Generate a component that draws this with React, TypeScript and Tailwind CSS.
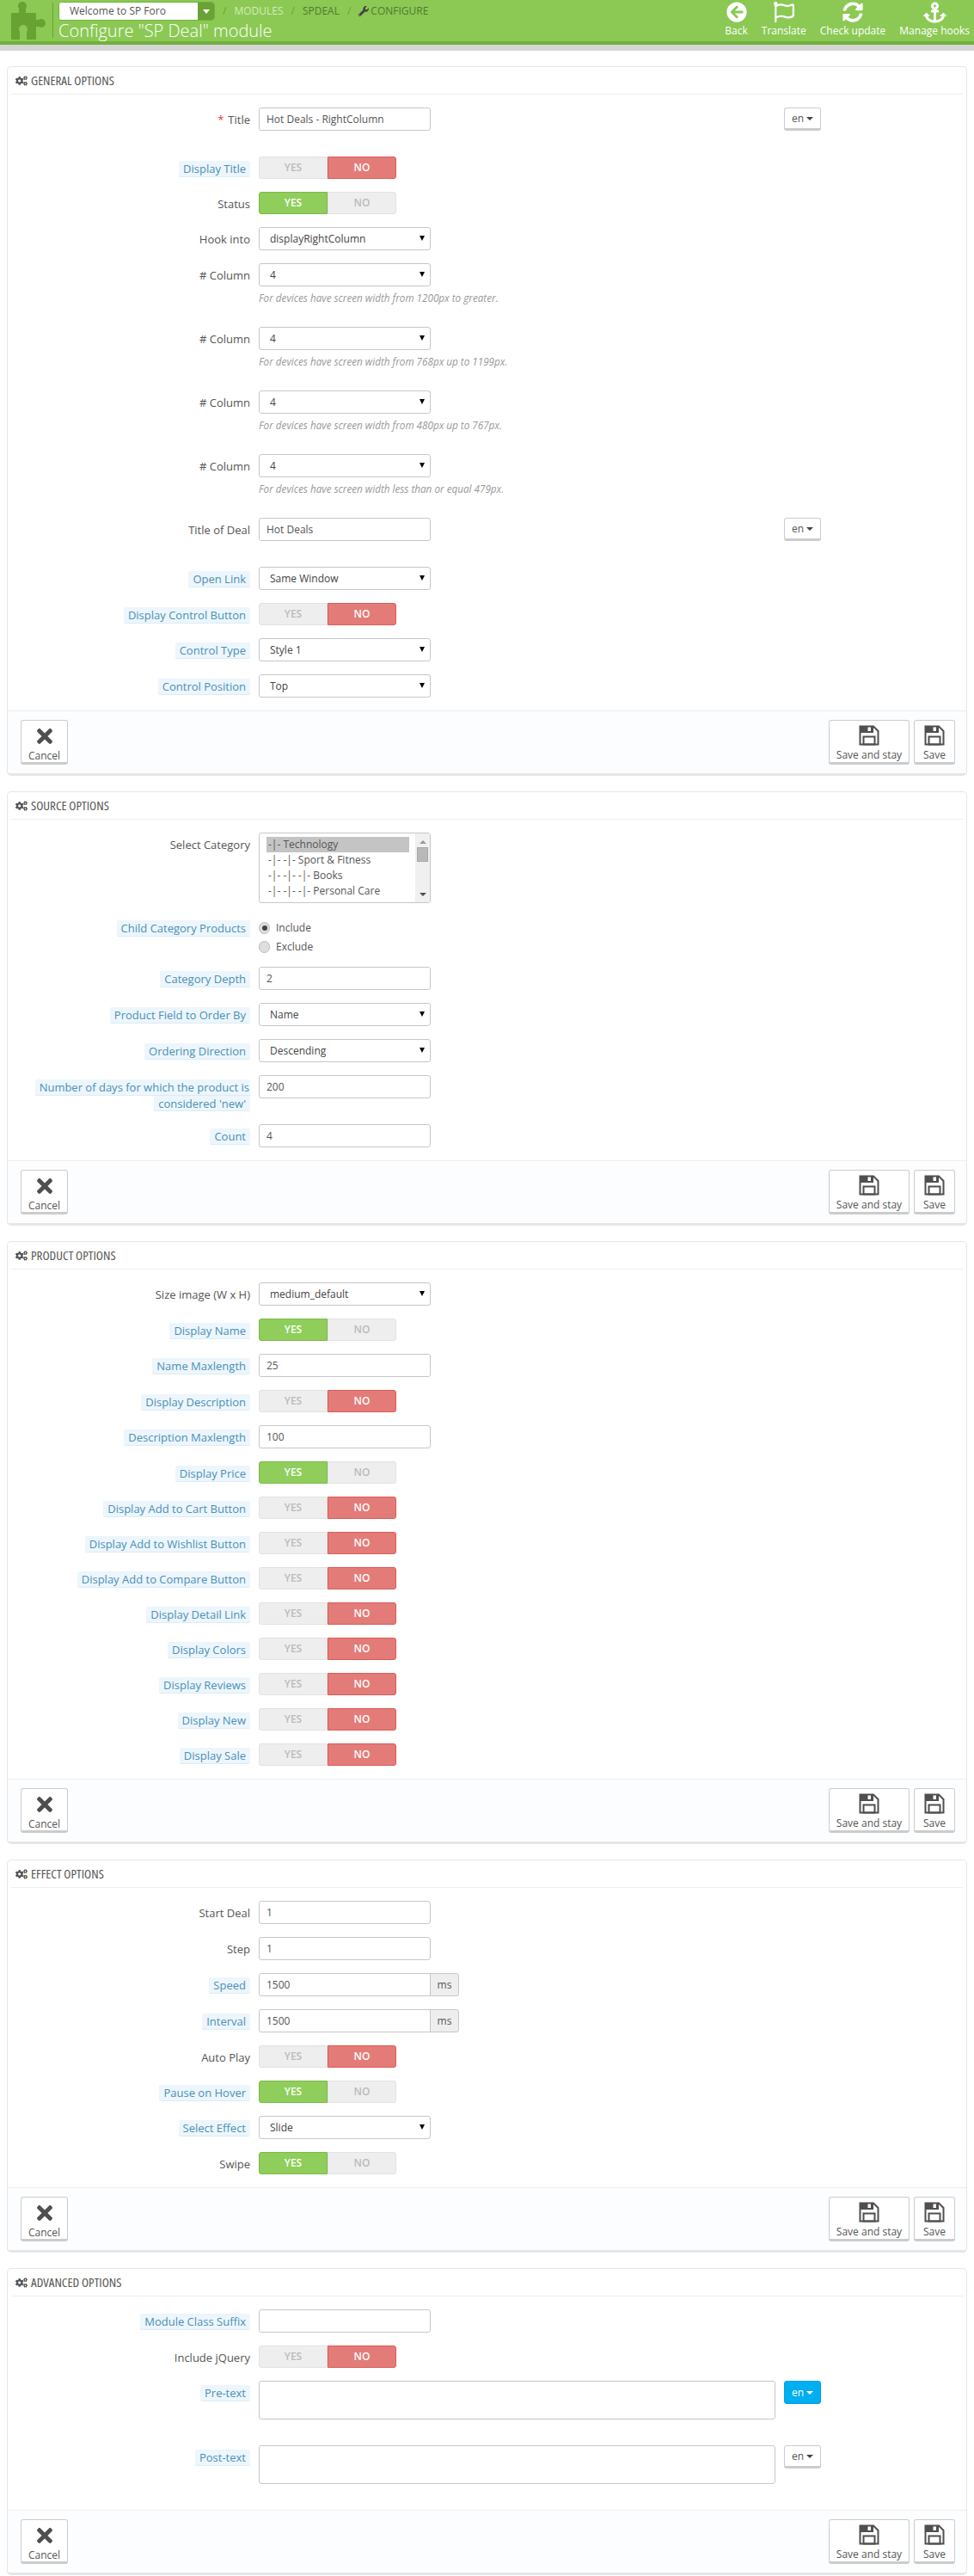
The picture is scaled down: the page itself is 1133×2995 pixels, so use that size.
import React from "react";
import {
  FaAnchor,
  FaArrowCircleLeft,
  FaCogs,
  FaRegFlag,
  FaSyncAlt,
  FaTimes,
  FaWrench,
} from "react-icons/fa";

const hintBox = "bg-[#edf6fc] border-b border-[#dcecf5] text-[#4a90b8]";

function Label({ text, hint, required, lines }: { text: string; hint?: boolean; required?: boolean; lines?: string[] }) {
  return (
    <div className="mr-[10px] flex w-[282px] shrink-0 flex-col items-end pt-[5px] text-right text-[13px]">
      {lines ? (
        lines.map((l, i) => (
          <span key={l} className={`block h-[18.5px] whitespace-nowrap pl-[5px] leading-[18px] ${i === 0 ? "pr-px" : "pr-[5px]"} ${hintBox}`}>
            {l}
          </span>
        ))
      ) : hint ? (
        <span className={`block h-[19px] rounded-[2px] px-[5px] leading-[18px] ${hintBox}`}>{text}</span>
      ) : (
        <span className="leading-[18px]">
          {required && <span className="mr-[5px] text-[#e5392d]">*</span>}
          {text}
        </span>
      )}
    </div>
  );
}

function Row({ label, hint, required, lines, mb = "mb-[15px]", children }: { label: string; hint?: boolean; required?: boolean; lines?: string[]; mb?: string; children: React.ReactNode }) {
  return (
    <div className={`flex ${mb}`}>
      <Label text={label} hint={hint} required={required} lines={lines} />
      <div className="min-w-0">{children}</div>
    </div>
  );
}

function TextInput({ value, rounded = "rounded-[3px]" }: { value: string; rounded?: string }) {
  return (
    <input
      readOnly
      value={value}
      className={`block h-[27px] w-[200px] border border-[#c7c7c7] ${rounded} bg-white pl-2 text-[12px] text-[#555] outline-none`}
    />
  );
}

function Lang({ active }: { active?: boolean }) {
  return (
    <button
      className={`flex h-[27px] w-[43px] items-center justify-center gap-[3px] rounded-[3px] border text-[12px] ${
        active ? "border-[#00a0e0] bg-[#00aff0] text-white" : "border-[#ccc] border-b-[3px] bg-white text-[#555]"
      }`}
    >
      en
      <span className={`h-0 w-0 border-x-[4px] border-t-[4px] border-x-transparent ${active ? "border-t-white" : "border-t-[#444]"}`} />
    </button>
  );
}

function TransInput({ value }: { value: string }) {
  return (
    <div className="flex">
      <TextInput value={value} />
      <div className="ml-[411px]">
        <Lang />
      </div>
    </div>
  );
}

function Select({ value }: { value: string }) {
  return (
    <div className="relative h-[27px] w-[200px]">
      <select className="block h-[27px] w-[200px] appearance-none rounded-[3px] border border-[#c7c7c7] bg-white pl-[12px] text-[12px] text-[#444] outline-none">
        <option>{value}</option>
      </select>
      <span className="absolute right-[7px] top-[10px] h-0 w-0 border-x-[3px] border-t-[6px] border-x-transparent border-t-black" />
    </div>
  );
}

function Switch({ on }: { on: boolean }) {
  return (
    <div className="flex h-[26px] w-[160px] text-center text-[12px] font-semibold leading-[24px]">
      <div
        className={`w-[80px] rounded-l-[3px] border ${
          on ? "border-[#7cb84a] bg-[#8fce5a] text-white" : "border-[#e2e2e2] bg-[#eeeeee] text-[#bbb]"
        }`}
      >
        YES
      </div>
      <div
        className={`w-[80px] rounded-r-[3px] border ${
          on ? "border-[#e2e2e2] bg-[#eeeeee] text-[#bbb]" : "border-[#dc5b57] bg-[#e37c78] text-white"
        }`}
      >
        NO
      </div>
    </div>
  );
}

function Addon({ value }: { value: string }) {
  return (
    <div className="flex h-[27px]">
      <TextInput value={value} rounded="rounded-l-[3px]" />
      <div className="-ml-px w-[34px] rounded-r-[3px] border border-[#c7c7c7] bg-[#eeeeee] text-center text-[12px] leading-[25px] text-[#555]">
        ms
      </div>
    </div>
  );
}

function Help({ text }: { text: string }) {
  return <p className="mb-[10px] mt-[5px] whitespace-nowrap text-[11.7px] italic leading-[17px] text-[#999]">{text}</p>;
}

function SaveIcon() {
  return (
    <svg width="24" height="24" viewBox="0 0 24 24">
      <path d="M1.5 1.5H17L22.5 7V22.5H1.5Z" fill="none" stroke="#504e4e" strokeWidth="2" />
      <path d="M1.5 1.5H17V9H1.5Z" fill="#504e4e" />
      <rect x="10.5" y="2.5" width="3.5" height="4.5" fill="#ffffff" />
      <rect x="5.5" y="13.5" width="13" height="9" fill="none" stroke="#504e4e" strokeWidth="2" />
    </svg>
  );
}

function PuzzleIcon() {
  return (
    <svg width="41" height="44" viewBox="0 0 41 44" className="shrink-0">
      <g fill="#67a232">
        <rect x="0" y="13" width="29" height="31" rx="1" />
        <circle cx="13" cy="5" r="5" />
        <rect x="9" y="7" width="8" height="8" />
        <circle cx="35" cy="25" r="5" />
        <rect x="27" y="21" width="7" height="8" />
      </g>
      <g fill="#8bc954">
        <circle cx="14" cy="32" r="5" />
        <rect x="10" y="35" width="8" height="9" />
      </g>
    </svg>
  );
}

function FootBtn({ icon, text, w }: { icon: React.ReactNode; text: string; w: string }) {
  return (
    <button className={`flex h-[52px] ${w} flex-col items-center rounded-[3px] border border-[#ccc] border-b-[3px] bg-white pt-[5px] text-[12px] text-[#555]`}>
      <span className="flex h-[25px] items-center text-[#504e4e]">{icon}</span>
      <span className="mt-[2px] leading-[17px]">{text}</span>
    </button>
  );
}

function Panel({ title, children }: { title: string; children: React.ReactNode }) {
  return (
    <section className="mb-[18px] overflow-hidden rounded-[5px] border border-[#e6e6e6] border-b-[3px] bg-white">
      <h2 className="mx-1 flex h-[32px] items-center border-b border-[#eeeeee] pl-[5px] font-['Open_Sans',sans-serif] text-[15px] font-normal uppercase text-[#555] [font-stretch:75%]">
        <FaCogs className="mr-[4px] text-[14px]" />
        {title}
      </h2>
      <div className="pt-[15px]">{children}</div>
      <div className="flex justify-between border-t border-[#eeeeee] bg-[#fcfdfe] py-[10px] pl-[15px] pr-[13px]">
        <FootBtn icon={<FaTimes size={26} />} text="Cancel" w="w-[55px]" />
        <div className="flex gap-[5px]">
          <FootBtn icon={<SaveIcon />} text="Save and stay" w="w-[94px]" />
          <FootBtn icon={<SaveIcon />} text="Save" w="w-[48px]" />
        </div>
      </div>
    </section>
  );
}

function Tool({ icon, text }: { icon: React.ReactNode; text: string }) {
  return (
    <div className="flex flex-col items-center">
      <span className="flex h-[28px] items-center">{icon}</span>
      <span className="text-[12px] leading-[16px]">{text}</span>
    </div>
  );
}

function CategoryList() {
  const rows = ["-|- Technology", "-|- -|- Sport & Fitness", "-|- -|- -|- Books", "-|- -|- -|- Personal Care"];
  return (
    <div className="flex h-[82px] w-[200px] overflow-hidden rounded-[3px] border border-[#c7c7c7] bg-white text-[12px] text-[#555]">
      <div className="flex-1 pl-2 pr-[7px] pt-1">
        {rows.map((r, i) => (
          <div key={r} className={`h-[18px] whitespace-nowrap pl-[2px] leading-[18px] ${i === 0 ? "bg-[#c4c4c4]" : ""}`}>
            {r}
          </div>
        ))}
      </div>
      <div className="flex w-[17px] flex-col items-center bg-[#f0f0f0]">
        <span className="mt-[8px] h-0 w-0 border-x-[4px] border-b-[4px] border-x-transparent border-b-[#999]" />
        <span className="mt-[4px] h-[17px] w-[13px] border border-[#a8a8a8] bg-[#b9b9b9]" />
        <span className="mt-[36px] h-0 w-0 border-x-[4px] border-t-[4px] border-x-transparent border-t-[#505050]" />
      </div>
    </div>
  );
}

function Radio({ on, text }: { on?: boolean; text: string }) {
  return (
    <div className="flex h-[22px] items-center">
      <span className="flex h-[14px] w-[13px] items-center justify-center rounded-full border border-[#bbb] bg-[#dedede]">
        {on && <span className="h-[6px] w-[6px] rounded-full bg-[#444]" />}
      </span>
      <span className="ml-[7px]">{text}</span>
    </div>
  );
}

export default function App() {
  return (
    <div className="min-h-[2995px] bg-white font-['Open_Sans',sans-serif] text-[12px] text-[#555]">
      <header className="flex h-[59px] items-start justify-between border-b-[7px] border-[#d5d5d5] bg-[#8bc954]">
        <div className="flex h-[52px] flex-1 border-b-[4px] border-[#72b03d] pl-[13px]">
          <div className="pt-[2px]">
            <PuzzleIcon />
          </div>
          <div className="ml-[7px] mt-[3px] h-[41px] w-px bg-[#6ba235]" />
          <div className="ml-[6px]">
            <div className="flex h-[24px] items-center pt-[2px]">
              <div className="flex h-[22px] w-[182px] overflow-hidden rounded-[3px] border border-[#72b03d] bg-white">
                <span className="w-[161px] pl-[12px] leading-[20px] text-[#555]">Welcome to SP Foro</span>
                <span className="flex flex-1 items-center justify-center bg-[#6ba235]">
                  <span className="h-0 w-0 border-x-[4px] border-t-[5px] border-x-transparent border-t-white" />
                </span>
              </div>
              <span className="ml-[9px] flex gap-[9px] text-[12px] uppercase">
                <span className="text-[#6ba235]">/</span>
                <span className="text-[#d3ecbb]">Modules</span>
                <span className="text-[#6ba235]">/</span>
                <span className="text-[#51792e]">SPDeal</span>
                <span className="text-[#6ba235]">/</span>
                <span className="flex items-center gap-[2px] text-[#51792e]">
                  <FaWrench className="text-[12px] text-[#444]" />
                  Configure
                </span>
              </span>
            </div>
            <div className="whitespace-nowrap text-[20px] font-light leading-[24px] text-white">Configure "SP Deal" module</div>
          </div>
        </div>
        <div className="flex h-[52px] gap-[16px] border-b-[4px] border-[#72b03d] pr-[5px] text-white">
          <Tool icon={<FaArrowCircleLeft size={24} />} text="Back" />
          <Tool icon={<FaRegFlag size={24} />} text="Translate" />
          <Tool icon={<FaSyncAlt size={24} />} text="Check update" />
          <Tool icon={<FaAnchor size={27} />} text="Manage hooks" />
        </div>
      </header>

      <main className="px-2 pt-[18px]">
        <Panel title="General Options">
          <Row label="Title" required mb="mb-[30px]"><TransInput value="Hot Deals - RightColumn" /></Row>
          <Row label="Display Title" hint><Switch on={false} /></Row>
          <Row label="Status"><Switch on /></Row>
          <Row label="Hook into"><Select value="displayRightColumn" /></Row>
          <Row label="# Column"><Select value="4" /><Help text="For devices have screen width from 1200px to greater." /></Row>
          <Row label="# Column"><Select value="4" /><Help text="For devices have screen width from 768px up to 1199px." /></Row>
          <Row label="# Column"><Select value="4" /><Help text="For devices have screen width from 480px up to 767px." /></Row>
          <Row label="# Column"><Select value="4" /><Help text="For devices have screen width less than or equal 479px." /></Row>
          <Row label="Title of Deal" mb="mb-[30px]"><TransInput value="Hot Deals" /></Row>
          <Row label="Open Link" hint><Select value="Same Window" /></Row>
          <Row label="Display Control Button" hint><Switch on={false} /></Row>
          <Row label="Control Type" hint><Select value="Style 1" /></Row>
          <Row label="Control Position" hint><Select value="Top" /></Row>
        </Panel>

        <Panel title="Source Options">
          <Row label="Select Category"><CategoryList /></Row>
          <Row label="Child Category Products" hint mb="mb-[12px]">
            <div className="pt-[3px]">
              <Radio on text="Include" />
              <Radio text="Exclude" />
            </div>
          </Row>
          <Row label="Category Depth" hint><TextInput value="2" /></Row>
          <Row label="Product Field to Order By" hint><Select value="Name" /></Row>
          <Row label="Ordering Direction" hint><Select value="Descending" /></Row>
          <Row label="Number of days" lines={["Number of days for which the product is", "considered 'new'"]}><TextInput value="200" /></Row>
          <Row label="Count" hint><TextInput value="4" /></Row>
        </Panel>

        <Panel title="Product Options">
          <Row label="Size image (W x H)"><Select value="medium_default" /></Row>
          <Row label="Display Name" hint><Switch on /></Row>
          <Row label="Name Maxlength" hint><TextInput value="25" /></Row>
          <Row label="Display Description" hint><Switch on={false} /></Row>
          <Row label="Description Maxlength" hint><TextInput value="100" /></Row>
          <Row label="Display Price" hint><Switch on /></Row>
          <Row label="Display Add to Cart Button" hint><Switch on={false} /></Row>
          <Row label="Display Add to Wishlist Button" hint><Switch on={false} /></Row>
          <Row label="Display Add to Compare Button" hint><Switch on={false} /></Row>
          <Row label="Display Detail Link" hint><Switch on={false} /></Row>
          <Row label="Display Colors" hint><Switch on={false} /></Row>
          <Row label="Display Reviews" hint><Switch on={false} /></Row>
          <Row label="Display New" hint><Switch on={false} /></Row>
          <Row label="Display Sale" hint><Switch on={false} /></Row>
        </Panel>

        <Panel title="Effect Options">
          <Row label="Start Deal"><TextInput value="1" /></Row>
          <Row label="Step"><TextInput value="1" /></Row>
          <Row label="Speed" hint><Addon value="1500" /></Row>
          <Row label="Interval" hint><Addon value="1500" /></Row>
          <Row label="Auto Play"><Switch on={false} /></Row>
          <Row label="Pause on Hover" hint><Switch on /></Row>
          <Row label="Select Effect" hint><Select value="Slide" /></Row>
          <Row label="Swipe"><Switch on /></Row>
        </Panel>

        <Panel title="Advanced Options">
          <Row label="Module Class Suffix" hint><TextInput value="" /></Row>
          <Row label="Include jQuery"><Switch on={false} /></Row>
          <Row label="Pre-text" hint mb="mb-[30px]">
            <div className="flex gap-[10px]">
              <div className="h-[45px] w-[601px] rounded-[3px] border border-[#c7c7c7] bg-white" />
              <Lang active />
            </div>
          </Row>
          <Row label="Post-text" hint mb="mb-[30px]">
            <div className="flex gap-[10px]">
              <div className="h-[45px] w-[601px] rounded-[3px] border border-[#c7c7c7] bg-white" />
              <Lang />
            </div>
          </Row>
        </Panel>
      </main>
    </div>
  );
}
